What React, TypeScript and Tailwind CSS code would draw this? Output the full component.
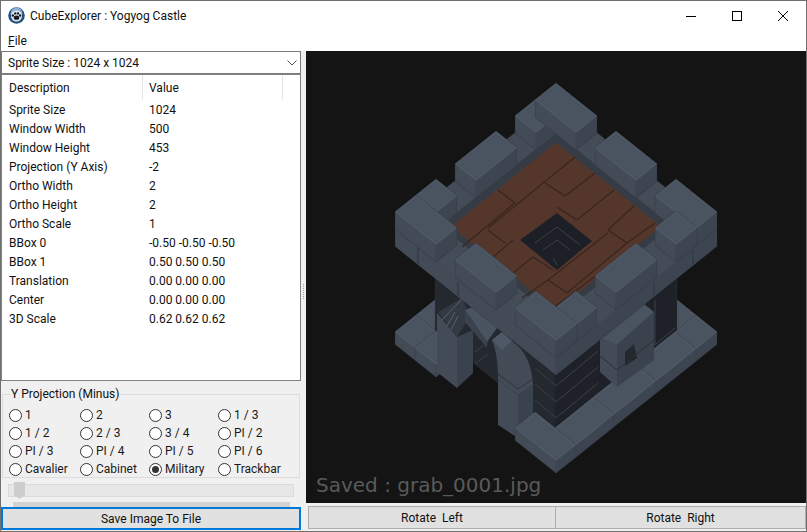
const UI_FONT = "font-['Roboto','Open_Sans',sans-serif]";

const rows = [
  ["Sprite Size", "1024"],
  ["Window Width", "500"],
  ["Window Height", "453"],
  ["Projection (Y Axis)", "-2"],
  ["Ortho Width", "2"],
  ["Ortho Height", "2"],
  ["Ortho Scale", "1"],
  ["BBox 0", "-0.50 -0.50 -0.50"],
  ["BBox 1", "0.50 0.50 0.50"],
  ["Translation", "0.00 0.00 0.00"],
  ["Center", "0.00 0.00 0.00"],
  ["3D Scale", "0.62 0.62 0.62"],
];

const radios = [
  "1", "2", "3", "1 / 3",
  "1 / 2", "2 / 3", "3 / 4", "PI / 2",
  "PI / 3", "PI / 4", "PI / 5", "PI / 6",
  "Cavalier", "Cabinet", "Military", "Trackbar",
];

// isometric projection of the castle: u runs down right, v down left, z up
const iso = (u: number, v: number, z: number) => `${556 + u - v},${84 + (u + v) * 0.8 - z}`;

type BlockProps = {
  u: [number, number];
  v: [number, number];
  z: number;
  h: number;
  top?: string;
  left?: string;
  right?: string;
  bevel?: string;
};

function Block({ u, v, z, h, top = "#4a5360", left = "#434b57", right = "#3d4551", bevel = "#505966" }: BlockProps) {
  const [u0, u1] = u;
  const [v0, v1] = v;
  const outline = `${iso(u0, v0, z)} ${iso(u1, v0, z)} ${iso(u1, v0, z - h)} ${iso(u1, v1, z - h)} ${iso(u0, v1, z - h)} ${iso(u0, v1, z)}`;
  return (
    <g strokeLinejoin="round" strokeWidth="1.5">
      <polygon points={outline} fill="#30353e" stroke="#30353e" strokeWidth="2.2" />
      <polygon
        points={`${iso(u0, v1, z)} ${iso(u1, v1, z)} ${iso(u1, v1, z - h)} ${iso(u0, v1, z - h)}`}
        fill={left}
        stroke={left}
      />
      <polygon
        points={`${iso(u1, v0, z)} ${iso(u1, v1, z)} ${iso(u1, v1, z - h)} ${iso(u1, v0, z - h)}`}
        fill={right}
        stroke={right}
      />
      <polygon
        points={`${iso(u0, v0, z)} ${iso(u1, v0, z)} ${iso(u1, v1, z)} ${iso(u0, v1, z)}`}
        fill={top}
        stroke={bevel}
      />
    </g>
  );
}

const merlons: [number, number, number, number][] = [
  [0, 20, 20, 40],
  [0, 40, 0, 20],
  [60, 100, 0, 20],
  [0, 20, 60, 100],
  [120, 160, 0, 20],
  [0, 20, 120, 140],
  [0, 40, 140, 160],
  [140, 160, 20, 40],
  [140, 160, 60, 100],
  [60, 100, 140, 160],
  [140, 160, 120, 140],
  [120, 160, 140, 160],
];

const floorLines = [
  [575, 157, 488, 228], [498, 190, 515, 203], [515, 203, 462, 247], [545, 183, 565, 196],
  [595, 173, 565, 196], [488, 230, 505, 243], [557, 207, 577, 220], [614, 190, 577, 220],
  [635, 205, 608, 230], [608, 230, 627, 243], [655, 223, 627, 243], [627, 243, 567, 293],
  [608, 233, 548, 280], [548, 280, 567, 293], [548, 280, 522, 298], [597, 275, 553, 308],
  [513, 240, 492, 258], [492, 258, 513, 273], [533, 257, 513, 273], [533, 257, 553, 270],
];

function Castle() {
  return (
    <svg viewBox="306 51 500 452" className="block w-full h-full">
      {/* back ends of the plinth */}
      <Block u={[120, 140]} v={[0, 20]} z={-120} h={12} />
      <Block u={[0, 20]} v={[120, 140]} z={-120} h={12} />

      {/* tower body */}
      <Block u={[20, 140]} v={[20, 140]} z={-30} h={90} top="#23272e" left="#24282f" right="#1e2228" bevel="#23272e" />
      <g stroke="#3a404a" strokeWidth="1" fill="none">
        <polyline points="535,384 556,402 598,367" />
        <polyline points="535,400 556,418 598,383" />
        <polyline points="535,368 556,386 598,351" />
        <polyline points="655,300 655,345 675,328" />
        <line x1="475" y1="352" x2="488" y2="342" />
        <line x1="475" y1="364" x2="488" y2="354" />
      </g>

      {/* plinth */}
      <Block u={[0, 20]} v={[140, 160]} z={-120} h={12} />
      <Block u={[20, 40]} v={[140, 160]} z={-120} h={12} />
      <Block u={[140, 160]} v={[0, 21]} z={-120} h={12} />
      <Block u={[140, 160]} v={[21, 61]} z={-120} h={12} />
      <Block u={[140, 160]} v={[61, 103]} z={-120} h={12} />
      <Block u={[140, 160]} v={[103, 141]} z={-120} h={12} />

      {/* doorway */}
      <polygon points="437,313 457,337 457,388 437,372" fill="#434b57" />
      <polygon points="457,337 473,330 473,373 457,388" fill="#3a424d" />
      <polygon points="438,312 462,298 470,316 457,337" fill="#343a44" />
      <g stroke="#59616e" strokeWidth="1" fill="none">
        <line x1="442" y1="320" x2="463" y2="298" />
        <line x1="447" y1="326" x2="455" y2="312" />
        <line x1="451" y1="330" x2="458" y2="316" />
      </g>
      <polygon points="465,310 477,305 497,328 487,342" fill="#4a5360" />
      <polygon points="465,310 487,342 487,348 465,322" fill="#3a424d" />
      <polygon points="498,380 518,395 518,438 498,425" fill="#434b57" />
      <polygon points="518,395 533,385 533,440 518,438" fill="#3a424d" />
      <path d="M492 340 L502 332 L520 348 C528 358 532 368 533 385 L518 395 L498 380 C498 362 496 350 492 340Z" fill="#434b57" />
      <path d="M492 340 L502 332 L512 341 L502 350Z" fill="#4f5866" />
      <path d="M498 374 L518 389 L533 379" fill="none" stroke="#2e343d" strokeWidth="1" />

      {/* front corner of the plinth sits over the door pillar */}
      <Block u={[120, 160]} v={[141, 160]} z={-120} h={12} />

      {/* balcony on the right face */}
      <polygon points="600,338 617,345 617,387 600,372" fill="#434b57" />
      <polygon points="617,345 654,312 654,360 617,387" fill="#3a424d" />
      <polygon points="600,338 643,303 654,312 617,345" fill="#4a5360" />
      <polygon points="625,352 634,344 637,358 625,366" fill="#23272e" />
      <g stroke="#2a2f37" strokeWidth="1" fill="none">
        <polyline points="600,356 617,370 654,340" />
      </g>

      {/* wall slab, walkway and brick floor */}
      <Block u={[0, 160]} v={[0, 160]} z={-17} h={17} top="#444c58" bevel="#444c58" />
      <g stroke="#2e343d" strokeWidth="1" fill="none">
        <line x1="418" y1="248" x2="418" y2="264" />
        <line x1="693" y1="250" x2="693" y2="264" />
        <line x1="654" y1="282" x2="654" y2="298" />
        <line x1="458" y1="282" x2="458" y2="298" />
      </g>
      <polygon points={`${iso(20, 20, -17)} ${iso(136, 20, -17)} ${iso(136, 136, -17)} ${iso(20, 136, -17)}`} fill="#363c46" />
      <polygon points={`${iso(26, 26, -17)} ${iso(131, 26, -17)} ${iso(131, 131, -17)} ${iso(26, 131, -17)}`} fill="#55362b" />
      <g stroke="#38251e" strokeWidth="1.2">
        {floorLines.map(([x1, y1, x2, y2], i) => (
          <line key={i} x1={x1} y1={y1} x2={x2} y2={y2} />
        ))}
      </g>
      <polygon points="557,213 592,241 557,270 520,240" fill="#1c2026" />
      <g stroke="#3a4048" strokeWidth="1" fill="none">
        <polyline points="535,243 557,227 580,245" />
        <polyline points="543,250 557,240 570,250" />
        <polyline points="553,258 557,265" />
      </g>

      {merlons.map(([u0, u1, v0, v1], i) => (
        <Block key={i} u={[u0, u1]} v={[v0, v1]} z={0} h={17} />
      ))}
    </svg>
  );
}

function Radio({ label, checked }: { label: string; checked?: boolean }) {
  return (
    <div className="flex items-center h-[18px]">
      <span className="w-[13px] h-[13px] rounded-full border border-[#333] bg-white flex items-center justify-center shrink-0">
        {checked && <span className="w-[7px] h-[7px] rounded-full bg-[#333]" />}
      </span>
      <span className="ml-[3px] text-[12px] text-[#1a1a1a]">{label}</span>
    </div>
  );
}

export default function App() {
  return (
    <div className={`w-[807px] h-[532px] flex flex-col bg-[#f0f0f0] border border-[#707070] overflow-hidden text-[12px] text-[#111] ${UI_FONT}`}>
      <div className="h-[29px] shrink-0 bg-white flex items-center">
        <svg viewBox="0 0 16 16" className="w-[17px] h-[17px] ml-[7px]">
          <circle cx="8" cy="8" r="7.8" fill="#24507f" />
          <circle cx="8" cy="6" r="5.5" fill="#8fb0d2" />
          <circle cx="8" cy="8.5" r="5.2" fill="#dfe7f0" />
          <ellipse cx="8" cy="10" rx="2.6" ry="2.1" fill="#15181d" />
          <circle cx="4.6" cy="8" r="1.1" fill="#15181d" />
          <circle cx="6.8" cy="6" r="1.1" fill="#15181d" />
          <circle cx="9.4" cy="6" r="1.1" fill="#15181d" />
          <circle cx="11.4" cy="8" r="1.1" fill="#15181d" />
        </svg>
        <span className="ml-[5px] text-[12px] flex-1">CubeExplorer : Yogyog Castle</span>
        <div className="w-[46px] flex justify-center">
          <svg width="10" height="10" viewBox="0 0 10 10"><path d="M0 5.5H10" stroke="#000" /></svg>
        </div>
        <div className="w-[46px] flex justify-center">
          <svg width="10" height="10" viewBox="0 0 10 10"><rect x="0.5" y="0.5" width="9" height="9" fill="none" stroke="#000" /></svg>
        </div>
        <div className="w-[46px] flex justify-center">
          <svg width="10" height="10" viewBox="0 0 10 10"><path d="M0 0L10 10M10 0L0 10" stroke="#000" /></svg>
        </div>
      </div>

      <div className="h-[21px] shrink-0 bg-white flex items-center pl-[7px]">
        <span><span className="underline">F</span>ile</span>
      </div>

      <div className="flex-1 flex min-h-0">
        <div className="w-[300px] shrink-0 flex flex-col">
          <div className="h-[23px] shrink-0 bg-white border border-[#7a7a7a] flex items-center justify-between pl-[6px] pr-[3px]">
            <span>Sprite Size : 1024 x 1024</span>
            <svg width="10" height="6" viewBox="0 0 10 6"><path d="M0.5 0.5L5 5L9.5 0.5" fill="none" stroke="#555" /></svg>
          </div>

          <div className="h-[307px] shrink-0 bg-white border border-[#828282]">
            <div className="h-[25px] flex items-center">
              <div className="w-[141px] h-full pl-[7px] flex items-center border-r border-[#e5e5e5]">Description</div>
              <div className="w-[140px] h-full pl-[6px] flex items-center border-r border-[#e5e5e5]">Value</div>
            </div>
            {rows.map(([name, value]) => (
              <div key={name} className="h-[19px] flex items-center">
                <div className="w-[141px] pl-[7px]">{name}</div>
                <div className="pl-[6px]">{value}</div>
              </div>
            ))}
          </div>

          <fieldset className="mt-[6px] mx-px h-[91px] shrink-0 border border-[#dcdcdc] pl-[6px]">
            <legend className="ml-px px-px text-[12px] leading-[14px]">Y Projection (Minus)</legend>
            <div className="grid grid-cols-[71px_69px_69px_1fr] auto-rows-[18px] mt-[5px]">
              {radios.map((r) => (
                <Radio key={r} label={r} checked={r === "Military"} />
              ))}
            </div>
          </fieldset>

          <div className="relative mt-[6px] ml-[7px] mr-[7px] h-[13px] shrink-0 bg-[#e7e7e7] border border-[#dadada]">
            <svg width="11" height="17" viewBox="0 0 11 17" className="absolute left-[5px] top-[-3px]">
              <path d="M0 0H11V13L5.5 17L0 13Z" fill="#cdcdcd" />
            </svg>
          </div>
          <div className="mt-[5px] ml-[12px] mr-[11px] h-[5px] shrink-0 bg-[#d2d2d2]" />
          <button className="h-[23px] shrink-0 bg-[#e1e1e1] border-2 border-[#0078d7] text-center text-[12px]">
            Save Image To File
          </button>
        </div>

        <div className="w-[5px] shrink-0 flex flex-col items-center justify-center gap-px">
          {[0, 1, 2, 3, 4, 5, 6, 7].map((i) => (
            <span key={i} className="w-px h-px bg-[#a0a0a0]" />
          ))}
        </div>

        <div className="flex-1 flex flex-col min-w-0">
          <div className="relative h-[452px] shrink-0 bg-[#141414]">
            <Castle />
            <span className="absolute left-[10px] bottom-[6px] font-['DejaVu_Sans',sans-serif] text-[20px] leading-[24px] text-[#5a5a5a]">
              Saved : grab_0001.jpg
            </span>
          </div>
          <div className="flex pt-[3px] pl-[2px]">
            <button className="w-[248px] h-[23px] bg-[#e1e1e1] border border-[#adadad] text-[12px] whitespace-pre">Rotate  Left</button>
            <button className="flex-1 h-[23px] bg-[#e1e1e1] border border-l-0 border-[#adadad] text-[12px] whitespace-pre">Rotate  Right</button>
          </div>
        </div>
      </div>
    </div>
  );
}
